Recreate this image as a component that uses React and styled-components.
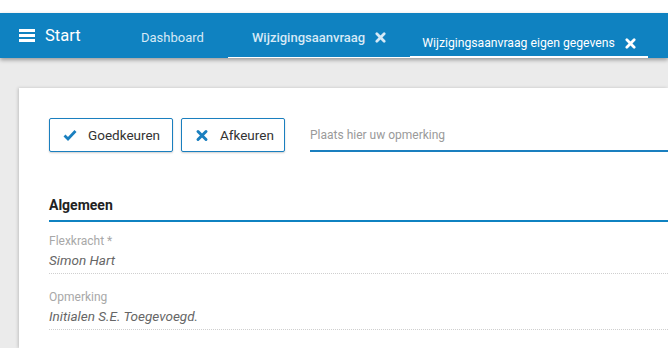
import React from "react";
import styled, { createGlobalStyle } from "styled-components";

const Global = createGlobalStyle`
  html, body { margin: 0; padding: 0; }
  body {
    background: #ebebeb;
    font-family: Roboto, "Liberation Sans", Arial, sans-serif;
    overflow: hidden;
    width: 668px;
    height: 348px;
  }
`;

const Page = styled.div`
  display: flex;
  flex-direction: column;
  padding-top: 13px;
  height: 348px;
  box-sizing: border-box;
  background: linear-gradient(#ffffff 0 13px, #ebebeb 13px);
`;

const TopBar = styled.header`
  position: relative;
  z-index: 2;
  display: flex;
  align-items: stretch;
  flex: none;
  height: 45px;
  background: #0f82c1;
  box-shadow: 0 2px 4px rgba(0, 0, 0, 0.35);
`;

const Brand = styled.div`
  display: flex;
  align-items: center;
  flex: none;
  gap: 10px;
  padding-left: 19px;
  width: 98px;
  color: #ffffff;
  font-size: 16.5px;
`;

const Burger = styled.span`
  display: flex;
  flex-direction: column;
  justify-content: space-between;
  width: 16px;
  height: 13px;
  & > i {
    display: block;
    height: 3px;
    background: #ffffff;
  }
`;

const NavItem = styled.div`
  display: flex;
  align-items: center;
  flex: none;
  gap: 10px;
  box-sizing: border-box;
  padding: ${(p) => p.$pt}px ${(p) => p.$px}px 0;
  color: ${(p) => (p.$active ? "#ffffff" : "#d6e9f6")};
  font-size: ${(p) => p.$fs}px;
  font-weight: ${(p) => (p.$bold ? 500 : 400)};
  border-bottom: ${(p) => p.$line}px solid #ffffff;
  white-space: nowrap;
`;

const Close = styled.svg`
  width: 11px;
  height: 11px;
  flex: none;
`;

const Main = styled.main`
  flex: 1;
  padding: 30px 0 0 19px;
  display: flex;
`;

const Card = styled.section`
  flex: 1;
  background: #ffffff;
  box-shadow: -1px 0 3px rgba(0, 0, 0, 0.18);
  padding: 30px 0 0 30px;
`;

const Actions = styled.div`
  display: flex;
  align-items: flex-end;
  gap: 8px;
`;

const Button = styled.button`
  display: flex;
  align-items: center;
  gap: 11px;
  height: 34px;
  box-sizing: border-box;
  padding: 0 13px;
  background: #ffffff;
  border: 1px solid #1a7fbf;
  border-radius: 2px;
  box-shadow: 0 1px 2px rgba(0, 0, 0, 0.2);
  color: #333333;
  font-family: Roboto, "Liberation Sans", Arial, sans-serif;
  font-size: 13.5px;
  width: ${(p) => p.$w}px;
`;

const Icon = styled.svg`
  width: 14px;
  height: 14px;
  flex: none;
`;

const Remark = styled.input`
  flex: 1;
  margin-left: 17px;
  height: 33px;
  box-sizing: border-box;
  border: none;
  border-bottom: 2px solid #1a7fbf;
  outline: none;
  padding: 0;
  font-family: Roboto, "Liberation Sans", Arial, sans-serif;
  font-size: 12px;
  color: #333;
  background: transparent;
  &::placeholder { color: #9a9a9a; }
`;

const Section = styled.div`
  margin-top: 45px;
`;

const SectionTitle = styled.h3`
  margin: 0;
  padding-bottom: 7px;
  font-size: 14px;
  line-height: 16px;
  font-weight: 700;
  color: #222222;
  border-bottom: 2px solid #0f82c1;
`;

const Field = styled.div`
  display: flex;
  flex-direction: column;
  gap: 4px;
  padding: 12px 0 5px;
  border-bottom: 1px dotted #cfcfcf;
  & + & { padding-top: 16px; }
`;

const Label = styled.span`
  font-size: 12px;
  line-height: 14px;
  color: #a8a8a8;
`;

const Value = styled.span`
  font-size: 13.5px;
  line-height: 16px;
  font-style: italic;
  color: #666666;
`;

const X = () => (
  <Close viewBox="0 0 12 12">
    <path d="M2 2 L10 10 M10 2 L2 10" stroke="currentColor" strokeWidth="3" strokeLinecap="round" />
  </Close>
);

export default function App() {
  return (
    <>
      <Global />
      <Page>
        <TopBar>
          <Brand>
            <Burger>
              <i />
              <i />
              <i />
            </Burger>
            Start
          </Brand>
          <NavItem $pt={4} $px={24} $fs={13} $line={0}>
            Dashboard
          </NavItem>
          <NavItem $pt={4} $px={24} $fs={13} $bold $line={1}>
            Wijzigingsaanvraag <X />
          </NavItem>
          <NavItem $pt={17} $px={12} $fs={12.2} $active $line={2}>
            Wijzigingsaanvraag eigen gegevens <X />
          </NavItem>
        </TopBar>
        <Main>
          <Card>
            <Actions>
              <Button $w={124}>
                <Icon viewBox="0 0 14 14">
                  <path d="M1.5 7.5 L5 11 L12.5 3" fill="none" stroke="#1a7fbf" strokeWidth="2.8" />
                </Icon>
                Goedkeuren
              </Button>
              <Button $w={104}>
                <Icon viewBox="0 0 14 14">
                  <path d="M3 3.5 L11 11.5 M11 3.5 L3 11.5" stroke="#1a7fbf" strokeWidth="3" strokeLinecap="round" />
                </Icon>
                Afkeuren
              </Button>
              <Remark placeholder="Plaats hier uw opmerking" />
            </Actions>
            <Section>
              <SectionTitle>Algemeen</SectionTitle>
              <Field>
                <Label>Flexkracht *</Label>
                <Value>Simon Hart</Value>
              </Field>
              <Field>
                <Label>Opmerking</Label>
                <Value>Initialen S.E. Toegevoegd.</Value>
              </Field>
            </Section>
          </Card>
        </Main>
      </Page>
    </>
  );
}
